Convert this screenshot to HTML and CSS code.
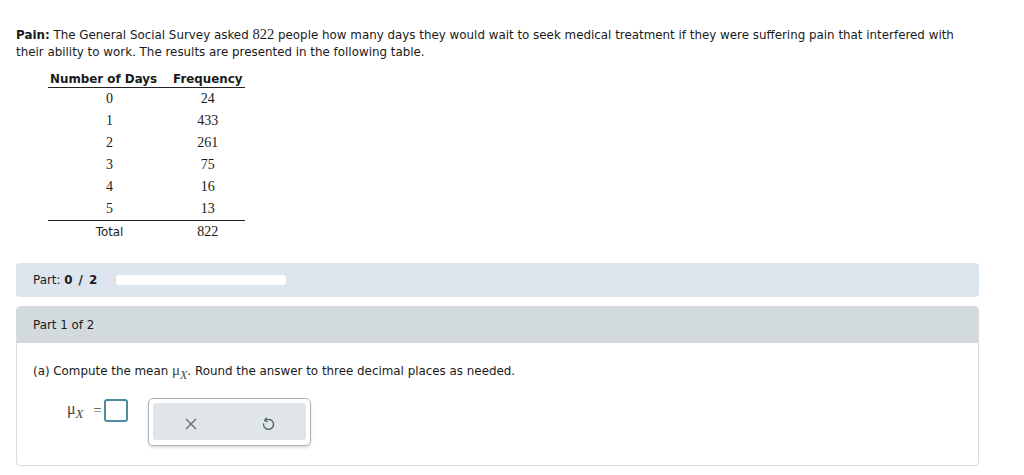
FILE: index.html
```html
<!DOCTYPE html>
<html>
<head>
<meta charset="utf-8">
<link rel="stylesheet" href="styles.css">
</head>
<body>
<div class="page">
  <p class="intro"><b>Pain:</b> The General Social Survey asked <span class="num">822</span> people how many days they would wait to seek medical treatment if they were suffering pain that interfered with<br>their ability to work. The results are presented in the following table.</p>
  <table class="freq">
    <thead>
      <tr><th class="c1">Number of Days</th><th class="c2">Frequency</th></tr>
    </thead>
    <tbody>
      <tr><td>0</td><td>24</td></tr>
      <tr><td>1</td><td>433</td></tr>
      <tr><td>2</td><td>261</td></tr>
      <tr><td>3</td><td>75</td></tr>
      <tr><td>4</td><td>16</td></tr>
      <tr><td>5</td><td>13</td></tr>
    </tbody>
    <tfoot>
      <tr><td class="sans">Total</td><td>822</td></tr>
    </tfoot>
  </table>

  <div class="partbar">
    <span>Part: <b>0 / 2</b></span>
    <div class="progress"></div>
  </div>

  <div class="partbox">
    <div class="parthead">Part 1 of 2</div>
    <div class="partbody">
      <p class="question">(a) Compute the mean <span class="mu">μ<sub>X</sub></span>. Round the answer to three decimal places as needed.</p>
      <div class="answer">
        <div class="eq"><span class="mu big">μ<sub>X</sub></span><span class="equals">=</span><span class="inbox"></span></div>
        <div class="tools">
          <div class="tools-inner">
            <svg width="12" height="12" viewBox="0 0 12 12"><path d="M1 1 L11 11 M11 1 L1 11" stroke="#5a6b78" stroke-width="1.3" fill="none"/></svg>
            <svg width="14" height="16" viewBox="0 0 14 16"><path d="M4.2 4.6 A5 5 0 1 1 2.6 7.4" stroke="#4f6877" stroke-width="1.4" fill="none"/><path d="M5.5 1.5 L3.6 4.6 L6.8 5.6" stroke="#4f6877" stroke-width="1.4" fill="none" stroke-linejoin="round"/></svg>
          </div>
        </div>
      </div>
    </div>
  </div>
</div>
</body>
</html>
```

FILE: styles.css
```css
html, body {
  margin: 0;
  padding: 0;
  background: #fff;
}
.page {
  padding: 27px 0 0 16px;
  width: 963px;
  font-family: "DejaVu Sans", Verdana, sans-serif;
  font-size: 11.88px;
  color: #1a1a1a;
}
.intro {
  margin: 0;
  line-height: 17px;
  white-space: nowrap;
}
.num {
  font-family: "Liberation Serif", "Times New Roman", serif;
  font-size: 14.5px;
  line-height: 1;
}
.freq {
  border-collapse: collapse;
  margin: 8px 0 0 32px;
}
.freq th {
  font-weight: bold;
  font-size: 11.88px;
  padding: 3px 2px 1px 2px;
  border-bottom: 1px solid #222;
  text-align: center;
}
.freq th.c1 { padding-right: 14px; }
.freq td {
  font-family: "Liberation Serif", "Times New Roman", serif;
  font-size: 14px;
  text-align: center;
  height: 22px;
  padding: 0;
}
.freq tbody tr:last-child td {
  border-bottom: 1px solid #222;
}
.freq td.sans {
  font-family: "DejaVu Sans", Verdana, sans-serif;
  font-size: 11.88px;
}
.partbar {
  margin-top: 20px;
  height: 34px;
  background: #dde6ee;
  border-radius: 4px;
  display: flex;
  align-items: center;
  padding-left: 17px;
  gap: 19px;
}
.partbar b {
  word-spacing: 2px;
}
.progress {
  width: 170px;
  height: 10px;
  background: #fff;
  border-radius: 3px;
}
.partbox {
  margin-top: 9px;
  border: 1px solid #d6dcdf;
  border-radius: 4px;
  overflow: hidden;
  height: 158px;
}
.parthead {
  background: #d3dadd;
  height: 36px;
  line-height: 36px;
  padding-left: 16px;
}
.partbody {
  padding: 19px 16px 0 16px;
}
.question {
  margin: 0;
  line-height: 18px;
}
.mu {
  font-family: "Liberation Serif", "Times New Roman", serif;
  font-size: 15px;
  color: #444;
  line-height: 1;
}
.mu sub {
  font-style: italic;
  font-size: 12px;
  vertical-align: -4px;
  line-height: 1;
}
.answer {
  margin-top: 17px;
  display: flex;
  align-items: flex-start;
  gap: 20px;
  padding-left: 34px;
}
.eq {
  display: flex;
  align-items: center;
  margin-top: 1px;
}
.eq .mu {
  font-size: 16px;
}
.eq .mu sub {
  font-size: 13px;
}
.equals {
  font-family: "Liberation Serif", serif;
  font-size: 14px;
  color: #444;
  margin: 0 3px 0 10px;
}
.inbox {
  width: 20px;
  height: 19px;
  border: 2px solid #4d8aa0;
  border-radius: 3px;
}
.tools {
  width: 153px;
  height: 37px;
  border: 1px solid #aab4ba;
  border-radius: 5px;
  padding: 4px 4px 5px 4px;
  background: #fff;
  box-shadow: 0 2px 3px rgba(0,0,0,0.12);
}
.tools-inner {
  height: 100%;
  background: #e0e5e8;
  border-radius: 3px;
  display: flex;
  align-items: center;
  justify-content: space-around;
  padding-top: 4px;
  box-sizing: border-box;
}
```
